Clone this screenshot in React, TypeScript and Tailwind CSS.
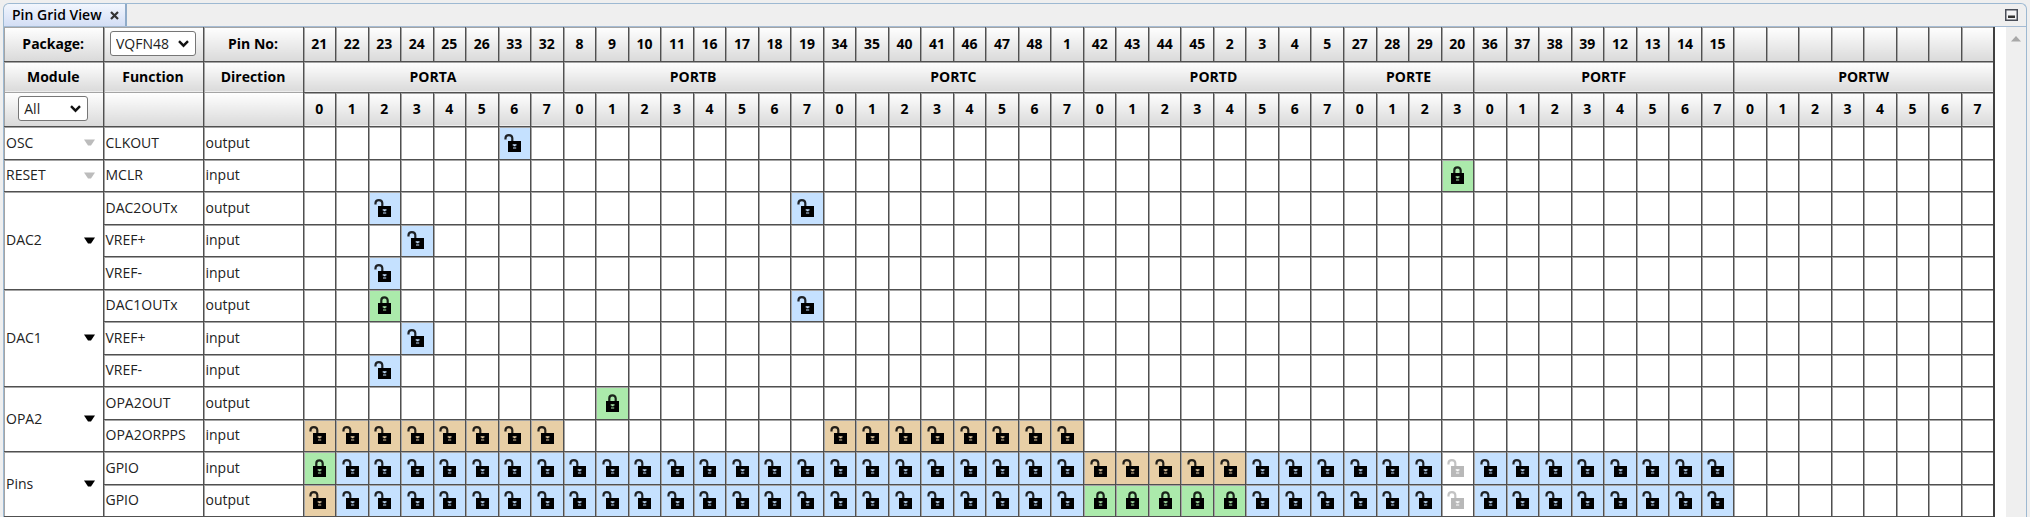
import { useState } from 'react';

type Port = { name: string; pins: string[] };
type Row = { fn: string; dir: string; cells: string };
type Module = { name: string; enabled: boolean; rows: Row[] };

const PORTS: Port[] = [
  { name: 'PORTA', pins: ['21', '22', '23', '24', '25', '26', '33', '32'] },
  { name: 'PORTB', pins: ['8', '9', '10', '11', '16', '17', '18', '19'] },
  { name: 'PORTC', pins: ['34', '35', '40', '41', '46', '47', '48', '1'] },
  { name: 'PORTD', pins: ['42', '43', '44', '45', '2', '3', '4', '5'] },
  { name: 'PORTE', pins: ['27', '28', '29', '20'] },
  { name: 'PORTF', pins: ['36', '37', '38', '39', '12', '13', '14', '15'] },
  { name: 'PORTW', pins: ['', '', '', '', '', '', '', ''] },
];

const EMPTY = '........';

// One character per pin, one group per port:
// u = available, L = locked, t = shared, x = disabled, . = not routable
const MODULES: Module[] = [
  { name: 'OSC', enabled: false, rows: [{ fn: 'CLKOUT', dir: 'output', cells: '......u.' }] },
  { name: 'RESET', enabled: false, rows: [{ fn: 'MCLR', dir: 'input', cells: EMPTY.repeat(4) + '...L' }] },
  {
    name: 'DAC2',
    enabled: true,
    rows: [
      { fn: 'DAC2OUTx', dir: 'output', cells: '..u.....' + '.......u' },
      { fn: 'VREF+', dir: 'input', cells: '...u....' },
      { fn: 'VREF-', dir: 'input', cells: '..u.....' },
    ],
  },
  {
    name: 'DAC1',
    enabled: true,
    rows: [
      { fn: 'DAC1OUTx', dir: 'output', cells: '..L.....' + '.......u' },
      { fn: 'VREF+', dir: 'input', cells: '...u....' },
      { fn: 'VREF-', dir: 'input', cells: '..u.....' },
    ],
  },
  {
    name: 'OPA2',
    enabled: true,
    rows: [
      { fn: 'OPA2OUT', dir: 'output', cells: EMPTY + '.L......' },
      { fn: 'OPA2ORPPS', dir: 'input', cells: 'tttttttt' + EMPTY + 'tttttttt' },
    ],
  },
  {
    name: 'Pins',
    enabled: true,
    rows: [
      { fn: 'GPIO', dir: 'input', cells: 'Luuuuuuu' + 'uuuuuuuu' + 'uuuuuuuu' + 'tttttuuu' + 'uuux' + 'uuuuuuuu' },
      { fn: 'GPIO', dir: 'output', cells: 'tuuuuuuu' + 'uuuuuuuu' + 'uuuuuuuu' + 'LLLLLuuu' + 'uuux' + 'uuuuuuuu' },
    ],
  },
];

const PINS = PORTS.flatMap((p) => p.pins.map((pin, bit) => ({ pin, bit, port: p.name })));

const CELL_BG: Record<string, string> = {
  u: 'bg-[#c5e1ff]',
  L: 'bg-[#abeaab]',
  t: 'bg-[#e8cfa6]',
  x: 'bg-white',
  '.': 'bg-white',
};

const LINE = 'border border-[#505050] shadow-[inset_1px_1px_0_#a4a4a4]';
const HEAD = 'bg-linear-to-b from-white to-[#dadada] p-0 text-center font-bold';

function LockIcon({ open }: { open: boolean }) {
  return (
    <svg viewBox="0 0 20 20" className="size-5" aria-hidden="true">
      <path
        d={open ? 'M1.5 6.4V5C1.7 1.2 8 1.2 8.3 5V9' : 'M7.3 9V5.4C7.3 1.3 13.7 1.3 13.7 5.4V9'}
        fill="none"
        stroke="currentColor"
        strokeOpacity="0.85"
        strokeWidth="2.2"
      />
      <path
        fillRule="evenodd"
        fill="currentColor"
        d="M4 8H17V19H4ZM8.7 11.2V12.4H9.7V13.2H11.5V12.4H12.5V11.2ZM9 14.6V15.6H12.2V14.6Z"
      />
    </svg>
  );
}

type PickerProps = {
  id: string;
  value: string;
  options: string[];
  size: string;
  onChange: (value: string) => void;
};

function Picker({ id, value, options, size, onChange }: PickerProps) {
  return (
    <div className={`${size} mx-auto grid h-[25px] items-center rounded-[3px] border border-[#767676] bg-white`}>
      <select
        id={id}
        value={value}
        onChange={(e) => onChange(e.target.value)}
        className="col-start-1 row-start-1 h-full w-full appearance-none bg-transparent pl-[5px] text-[14px] font-normal text-[#222]"
      >
        {options.map((o) => (
          <option key={o}>{o}</option>
        ))}
      </select>
      <svg
        viewBox="0 0 11 8"
        className="pointer-events-none col-start-1 row-start-1 mr-[6px] h-2 w-[11px] justify-self-end"
        aria-hidden="true"
      >
        <path d="M1 1.2L5.5 5.7L10 1.2" fill="none" stroke="#111" strokeWidth="2.4" />
      </svg>
    </div>
  );
}

function PinCell({ state, label }: { state: string; label: string }) {
  return (
    <td className={`${LINE} ${CELL_BG[state]} p-0`}>
      {state !== '.' && (
        <button
          type="button"
          aria-label={label}
          disabled={state === 'x'}
          className="flex w-full items-center justify-center text-black disabled:text-[#b8b8b8]"
        >
          <LockIcon open={state !== 'L'} />
        </button>
      )}
    </td>
  );
}

export default function App() {
  const [pkg, setPkg] = useState('VQFN48');
  const [filter, setFilter] = useState('All');
  const visible = MODULES.filter((m) => filter === 'All' || m.name === filter);

  return (
    <div className="flex min-h-screen flex-col bg-[#efefef] px-[3px] pt-[3px] font-['Open_Sans','Noto_Sans',sans-serif] text-[14px] leading-5 text-[#222]">
      <div className="flex grow flex-col rounded-t-md border border-b-0 border-[#9db9d2]">
        <header className="flex h-[23px] items-center justify-between border-b border-[#a5bbd3]">
          <div className="flex h-full items-center gap-2 rounded-tl-md border-r-2 border-[#8fabc9] bg-linear-to-b from-[#f2f6fd] to-[#d3def5] pr-1.5 pl-2 font-semibold text-black">
            <span>Pin Grid View</span>
            <button type="button" aria-label="Close" className="flex">
              <svg viewBox="0 0 9 9" className="size-[9px]" aria-hidden="true">
                <path d="M1 1L8 8M8 1L1 8" stroke="#333" strokeWidth="2.2" />
              </svg>
            </button>
          </div>
          <button type="button" aria-label="Minimize" className="mr-2 flex">
            <svg viewBox="0 0 13 12" className="h-3 w-[13px]" aria-hidden="true">
              <rect x="0.75" y="0.75" width="11.5" height="10.5" fill="#f4f4f6" stroke="#4a4e58" strokeWidth="1.5" />
              <rect x="3" y="6.5" width="7" height="2.5" fill="#333" />
            </svg>
          </button>
        </header>

        <div className="flex grow bg-white">
          <main className="min-w-0 grow pr-[11px]">
            <table className="w-full table-fixed border-collapse border-r-2 border-[#404040]">
              <colgroup>
                <col className="w-[99px]" />
                <col className="w-[100px]" />
                <col className="w-[100px]" />
                {PINS.map((_, i) => (
                  <col key={i} />
                ))}
              </colgroup>
              <thead className="text-black">
                <tr className="h-[34px]">
                  <th className={`${LINE} ${HEAD} border-t-0 border-l-0`}>
                    <label htmlFor="package">Package:</label>
                  </th>
                  <th className={`${LINE} ${HEAD} border-t-0`}>
                    <Picker id="package" value={pkg} options={['VQFN48']} size="w-[86px]" onChange={setPkg} />
                  </th>
                  <th className={`${LINE} ${HEAD} border-t-0`}>Pin No:</th>
                  {PINS.map((p, i) => (
                    <th key={i} className={`${LINE} ${HEAD} border-t-0`}>
                      {p.pin}
                    </th>
                  ))}
                </tr>
                <tr className="h-[31px]">
                  <th className={`${LINE} ${HEAD} border-b-0 border-l-0`}>
                    <label htmlFor="module">Module</label>
                  </th>
                  <th className={`${LINE} ${HEAD} border-b-0`}>Function</th>
                  <th className={`${LINE} ${HEAD} border-b-0`}>Direction</th>
                  {PORTS.map((p) => (
                    <th key={p.name} colSpan={p.pins.length} className={`${LINE} ${HEAD}`}>
                      {p.name}
                    </th>
                  ))}
                </tr>
                <tr className="h-[34px]">
                  <th className={`${LINE} ${HEAD} border-t-0 border-l-0`}>
                    <Picker
                      id="module"
                      value={filter}
                      options={['All', ...MODULES.map((m) => m.name)]}
                      size="w-[70px]"
                      onChange={setFilter}
                    />
                  </th>
                  <th className={`${LINE} ${HEAD} border-t-0`} />
                  <th className={`${LINE} ${HEAD} border-t-0`} />
                  {PINS.map((p, i) => (
                    <th key={i} className={`${LINE} ${HEAD}`}>
                      {p.bit}
                    </th>
                  ))}
                </tr>
              </thead>
              <tbody>
                {visible.flatMap((m) =>
                  m.rows.map((row, r) => (
                    <tr key={m.name + r} className="odd:h-[33px] even:h-8">
                      {r === 0 && (
                        <td rowSpan={m.rows.length} className={`${LINE} border-l-0 p-0 pr-2 pl-[2px]`}>
                          <div className="flex items-center justify-between">
                            <span>{m.name}</span>
                            <button
                              type="button"
                              aria-label={`${m.name} options`}
                              disabled={!m.enabled}
                              className="flex text-black disabled:text-[#bcbcbc]"
                            >
                              <svg viewBox="0 0 11 7" className="h-[7px] w-[11px]" aria-hidden="true">
                                <path d="M0 0.5H11L7 6.5H4Z" fill="currentColor" />
                              </svg>
                            </button>
                          </div>
                        </td>
                      )}
                      <td className={`${LINE} p-0 pl-[2px]`}>{row.fn}</td>
                      <td className={`${LINE} p-0 pl-[2px]`}>{row.dir}</td>
                      {PINS.map((p, i) => (
                        <PinCell key={i} state={row.cells[i] ?? '.'} label={`${row.fn} ${row.dir} ${p.port} ${p.bit}`} />
                      ))}
                    </tr>
                  )),
                )}
              </tbody>
            </table>
          </main>
          <aside className="flex w-5 shrink-0 items-start justify-center bg-[#efefef] pt-[9px]">
            <svg viewBox="0 0 10 6" className="h-1.5 w-2.5" aria-hidden="true">
              <path d="M0 5.5L5 0L10 5.5Z" fill="#a8a8a8" />
            </svg>
          </aside>
        </div>
      </div>
    </div>
  );
}
